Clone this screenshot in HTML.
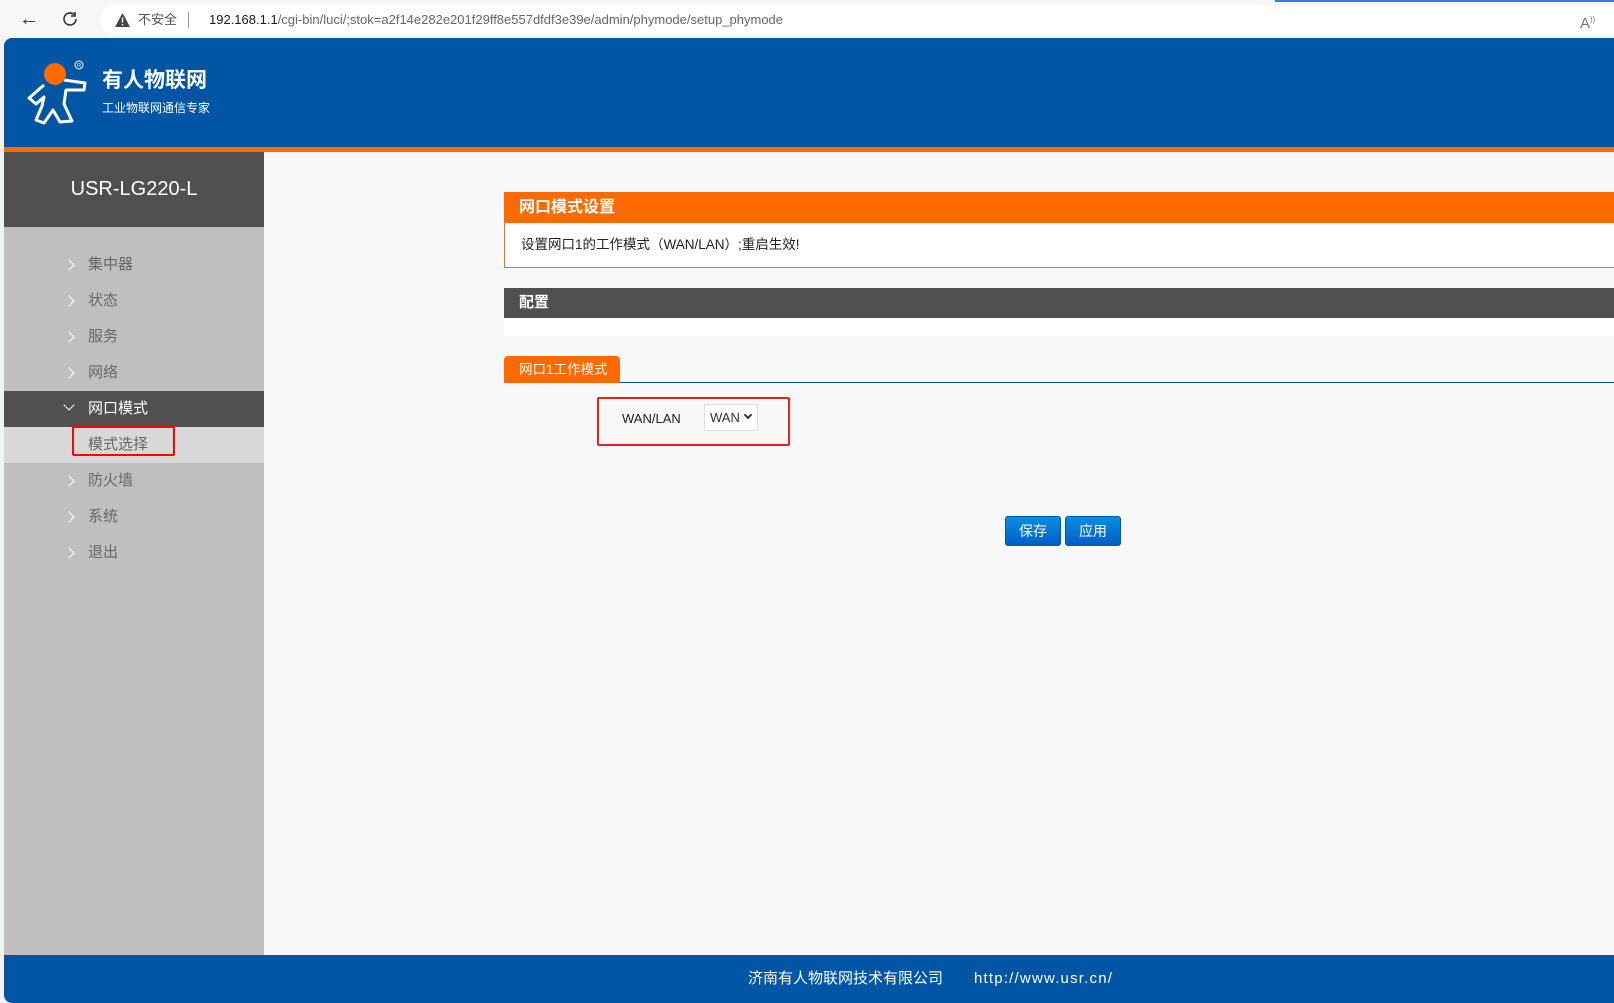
<!DOCTYPE html>
<html><head><meta charset="utf-8">
<style>
*{margin:0;padding:0;box-sizing:border-box}
body{width:1614px;height:1003px;overflow:hidden;background:#f1f3f4;font-family:"Liberation Sans","Noto Sans CJK SC",sans-serif;position:relative}
.abs{position:absolute}
.bar{left:0;top:0;width:1614px;height:38px;background:#f7f7f7}
.addr{left:100px;top:5px;width:1514px;height:30px;background:#fff;border-radius:15px 0 0 15px;font-size:13px;color:#1a1a1a;line-height:30px}
.header{left:4px;top:38px;width:1610px;height:109px;background:#0055a5;border-top-left-radius:8px}
.orange{left:4px;top:147px;width:1610px;height:5px;background:#ff6a00}
.main{left:264px;top:152px;width:1350px;height:803px;background:#f8f8f8}
.side{left:4px;top:152px;width:260px;height:803px;background:#bfbfbf}
.stitle{left:4px;top:152px;width:260px;height:75px;background:#505050;color:#fff;font-size:20px;text-align:center;line-height:75px}
.mi{left:4px;width:260px;height:36px;font-size:15px;color:#666;line-height:36px}
.mi .c{position:absolute;left:61px;top:14px;width:8px;height:8px;border-right:1.5px solid #fff;border-top:1.5px solid #fff;transform:rotate(45deg)}
.mi span{position:absolute;left:84px}
.footer{left:4px;top:955px;width:1610px;height:48px;background:#0055a5;border-bottom-left-radius:8px;color:#fff;font-size:14px;line-height:48px}
.btn{top:516px;width:56px;height:30px;border-radius:3px;background:linear-gradient(#0a8ee0,#005fc8);border:1px solid #0057b0;color:#fff;font-size:14px;text-align:center;line-height:28px}
</style></head><body>
<div class="abs bar"></div>
<div class="abs" style="left:1275px;top:0;width:339px;height:2px;background:#2b7de9"></div>
<div class="abs" style="left:19px;top:8px;font-size:20px;color:#333">&#8592;</div>
<svg class="abs" style="left:61px;top:10px" width="18" height="18" viewBox="0 0 18 18"><path d="M15 9a6 6 0 1 1-2-4.5" fill="none" stroke="#333" stroke-width="1.6"/><path d="M14 2v4h-4" fill="none" stroke="#333" stroke-width="1.6"/></svg>
<div class="abs addr">
<svg class="abs" style="left:15px;top:8px" width="15" height="14" viewBox="0 0 15 14"><path d="M7.5 0L15 14H0z" fill="#444"/><rect x="6.8" y="4.5" width="1.4" height="5" fill="#fff"/><rect x="6.8" y="11" width="1.4" height="1.4" fill="#fff"/></svg>
<span class="abs" style="left:38px;color:#555">不安全</span>
<span class="abs" style="left:88px;top:7px;width:1px;height:16px;background:#999"></span>
<span class="abs" style="left:109px">192.168.1.1<span style="color:#666">/cgi-bin/luci/;stok=a2f14e282e201f29ff8e557dfdf3e39e/admin/phymode/setup_phymode</span></span>
<span class="abs" style="left:1480px;color:#777;font-size:15px">A<sup style="font-size:8px">))</sup></span>
</div>
<div class="abs header"></div>
<svg class="abs" style="left:24px;top:58px" width="70" height="68" viewBox="0 0 70 68">
<path d="M20 27 L5 40 L12 46 L20 39 L18 48 L12 62 L20 65 L29 52 L36 64 L48 63 L40 46 L42 32 L60 32 L61 25 L40 22" fill="none" stroke="#fff" stroke-width="3" stroke-linejoin="round"/>
<circle cx="31" cy="16" r="11" fill="#ff6a00"/>
<circle cx="55" cy="7" r="4" fill="none" stroke="#fff" stroke-width="1"/><text x="53" y="9.5" font-size="6" fill="#fff" font-family="Liberation Sans">R</text>
</svg>
<div class="abs" style="left:102px;top:64px;color:#fff;font-size:21px;font-weight:bold">有人物联网</div>
<div class="abs" style="left:102px;top:99px;color:#fff;font-size:12px">工业物联网通信专家</div>
<div class="abs orange"></div>
<div class="abs main"></div>
<div class="abs side"></div>
<div class="abs stitle">USR-LG220-L</div>
<div class="abs mi" style="top:247px"><i class="c"></i><span>集中器</span></div>
<div class="abs mi" style="top:283px"><i class="c"></i><span>状态</span></div>
<div class="abs mi" style="top:319px"><i class="c"></i><span>服务</span></div>
<div class="abs mi" style="top:355px"><i class="c"></i><span>网络</span></div>
<div class="abs mi" style="top:391px;background:#505050;color:#fff"><i class="c" style="transform:rotate(135deg);top:10px"></i><span>网口模式</span></div>
<div class="abs mi" style="top:427px;background:#d8d8d8"><span>模式选择</span></div>
<div class="abs" style="left:72px;top:426px;width:103px;height:30px;border:2px solid #f00;border-radius:2px"></div>
<div class="abs mi" style="top:463px"><i class="c"></i><span>防火墙</span></div>
<div class="abs mi" style="top:499px"><i class="c"></i><span>系统</span></div>
<div class="abs mi" style="top:535px"><i class="c"></i><span>退出</span></div>

<div class="abs" style="left:504px;top:192px;width:1110px;height:31px;background:#ff6a00;color:#fff;font-size:16px;font-weight:bold;line-height:31px;padding-left:15px">网口模式设置</div>
<div class="abs" style="left:504px;top:223px;width:1110px;height:45px;background:#fff;border:1px solid #f07020;border-top:none;border-right:none;font-size:13.5px;line-height:44px;padding-left:16px;color:#222">设置网口1的工作模式（WAN/LAN）;重启生效!</div>
<div class="abs" style="left:504px;top:288px;width:1110px;height:30px;background:#505050;color:#fff;font-size:15px;font-weight:bold;line-height:30px;padding-left:15px">配置</div>
<div class="abs" style="left:504px;top:318px;width:1110px;height:18px;background:#fff"></div>
<div class="abs" style="left:504px;top:356px;width:116px;height:27px;background:#ff6a00;color:#fff;font-size:13.5px;line-height:27px;padding-left:15px;border-radius:4px 4px 0 0">网口1工作模式</div>
<div class="abs" style="left:620px;top:382px;width:994px;height:1px;background:#0055a5"></div>
<div class="abs" style="left:597px;top:397px;width:193px;height:49px;border:2px solid #f02020;border-radius:2px"></div>
<div class="abs" style="left:622px;top:411px;font-size:13px;color:#222">WAN/LAN</div>
<div class="abs" style="left:704px;top:404px;width:54px;height:27px;border:1px solid #ddd;background:#fff;font-size:13px;line-height:25px;padding-left:5px;color:#333">WAN<span style="position:absolute;left:40px;top:7px;width:6px;height:6px;border-right:2px solid #333;border-bottom:2px solid #333;transform:rotate(45deg)"></span></div>
<div class="abs btn" style="left:1005px">保存</div>
<div class="abs btn" style="left:1065px">应用</div>
<div class="abs footer"><span class="abs" style="left:744px;font-size:15px">济南有人物联网技术有限公司</span><span class="abs" style="left:970px;font-size:15px;letter-spacing:1.2px">http://www.usr.cn/</span></div>
</body></html>
